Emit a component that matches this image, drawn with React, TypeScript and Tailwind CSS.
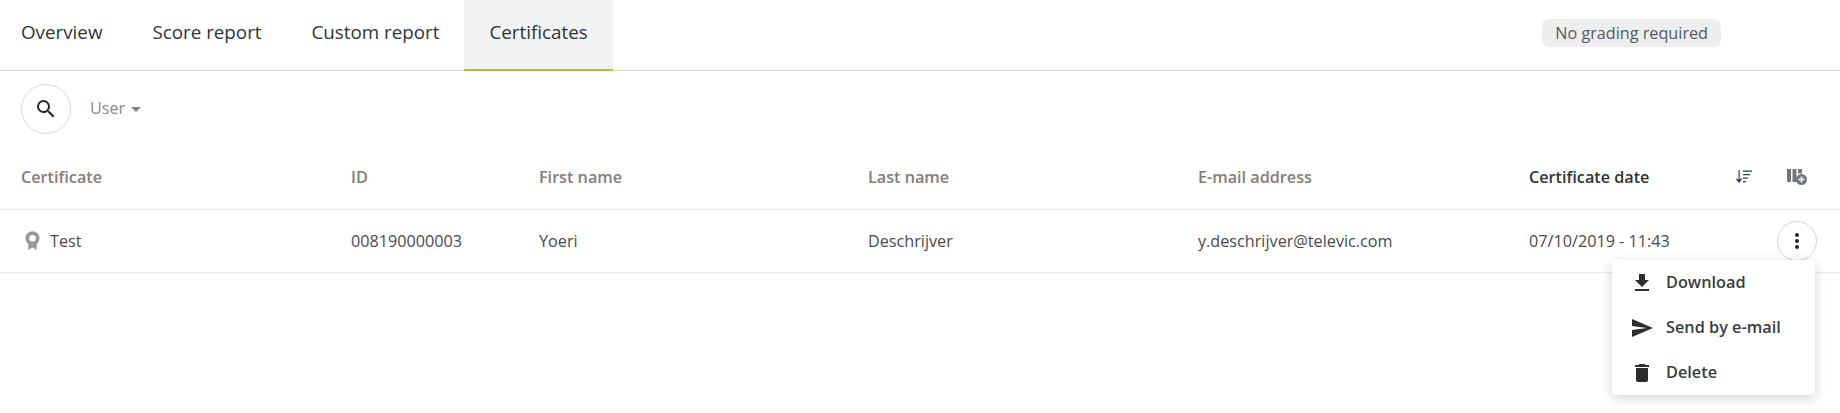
import { ReactNode } from 'react';

function Icon({ d, className }: { d: string; className: string }) {
  return (
    <svg viewBox="0 0 24 24" className={className} fill="currentColor">
      <path d={d} />
    </svg>
  );
}

const columns = ['Certificate', 'ID', 'First name', 'Last name', 'E-mail address'];
const gridCols = 'grid grid-cols-[330px_188px_329px_330px_331px_1fr]';

function MenuItem({ icon, label }: { icon: ReactNode; label: string }) {
  return (
    <div className="flex h-[45px] items-center">
      <div className="flex w-[54px] justify-center pl-[6px]">{icon}</div>
      <span className="text-[16.3px] font-semibold text-[#3a3d40]">{label}</span>
    </div>
  );
}

export default function App() {
  return (
    <div className="h-[413px] w-[1840px] overflow-hidden bg-white font-['Open_Sans',sans-serif]">
      {/* Tabs */}
      <div className="flex h-[71px] items-stretch border-b border-[#d4d4d4] text-[18.8px] text-[#2f3438]">
        <div className="flex items-center pr-[25px] pb-[6px] pl-[21px]">Overview</div>
        <div className="flex items-center px-[25px] pb-[6px]">Score report</div>
        <div className="flex items-center px-[25px] pb-[6px]">Custom report</div>
        <div className="-mb-px flex items-center border-b-2 border-[#a6c737] bg-[#f1f3f3] px-[25px] pb-[5px]">Certificates</div>
        <div className="mr-[119px] ml-auto flex items-center pb-[4px]">
          <span className="rounded-[7px] bg-[#eeeeee] px-[13px] py-[3px] text-[16.2px] leading-[22px] text-[#555a63]">No grading required</span>
        </div>
      </div>

      {/* Filter */}
      <div className="flex items-center pt-[13px] pl-[21px]">
        <button className="flex h-[50px] w-[50px] items-center justify-center rounded-full border border-[#d9d9d9]">
          <Icon className="h-6 w-6 text-[#23272a]" d="M15.5 14h-.79l-.28-.27A6.471 6.471 0 0 0 16 9.5 6.5 6.5 0 1 0 9.5 16c1.61 0 3.09-.59 4.23-1.57l.27.28v.79l5 4.99L20.49 19l-4.99-5zm-6 0C7.01 14 5 11.99 5 9.5S7.01 5 9.500 5 14 7.010 14 9.500 11.990 14 9.500 14z" />
        </button>
        <span className="mb-[2px] ml-[19px] text-[16.2px] text-[#8a8a8a]">User</span>
        <span className="ml-[6px] h-0 w-0 border-x-[5px] border-t-[5px] border-x-transparent border-t-[#808080]" />
      </div>

      {/* Table header */}
      <div className={`${gridCols} mt-[13px] h-[63px] items-center border-b border-[#eaeaea] pb-[2px] pl-[21px] text-[16.2px] font-semibold text-[#857d78]`}>
        {columns.map((c) => (
          <div key={c}>{c}</div>
        ))}
        <div className="flex items-center pr-[33px]">
          <span className="whitespace-nowrap text-[#2f3438]">Certificate date</span>
          <svg viewBox="0 0 16 13" className="ml-auto h-[13px] w-4 text-[#2a3f55]" fill="currentColor">
            <path d="M2.500 0h1.200v9.800L5.300 8.200l.8.8L3.100 13 0 9l.8-.8 1.700 1.600z" />
            <path d="M7 0.500h9v1.300H7zM7 4h7v1.300H7zM7 7.500h5v1.300H7zM7 11h3v1.300H7z" />
          </svg>
          <svg viewBox="0 0 20 16" className="ml-[35px] h-4 w-5 text-[#73777a]" fill="currentColor">
            <path d="M0 0h4v13H0zM5.500 0h4v13h-4zM11 0h4v4.500h-4z" />
            <circle cx="14.500" cy="10.500" r="5.500" />
            <path fill="#fff" d="M13.700 7.500h1.600v2.200h2.200v1.600h-2.200v2.200h-1.600v-2.200h-2.200V9.700h2.200z" />
          </svg>
        </div>
      </div>

      {/* Row */}
      <div className={`${gridCols} relative h-[63px] items-center border-b border-[#eaeaea] pl-[21px] text-[16.2px] text-[#4a4a4a]`}>
        <div className="flex items-center">
          <svg viewBox="0 0 16 20" className="ml-[4px] h-[19px] w-[15px] text-[#999999]" fill="currentColor">
            <path d="M3.500 12v8L8 17.500l4.500 2.500v-8z" />
            <path fillRule="evenodd" d="M8 0a7.500 7.500 0 1 1 0 15A7.500 7.500 0 0 1 8 0zM8 4a3.500 3.500 0 1 0 0 7 3.500 3.500 0 0 0 0-7z" />
          </svg>
          <span className="ml-[10px]">Test</span>
        </div>
        <div>008190000003</div>
        <div>Yoeri</div>
        <div>Deschrijver</div>
        <div>y.deschrijver@televic.com</div>
        <div>07/10/2019 - 11:43</div>
        <button className="absolute top-[11px] right-[23px] flex h-10 w-10 items-center justify-center rounded-full border border-[#d4d4d4] bg-white">
          <Icon className="h-6 w-6 text-[#23272a]" d="M12 8c1.100 0 2-.9 2-2s-.9-2-2-2-2 .9-2 2 .9 2 2 2zm0 2c-1.100 0-2 .9-2 2s.9 2 2 2 2-.9 2-2-.9-2-2-2zm0 6c-1.100 0-2 .9-2 2s.9 2 2 2 2-.9 2-2-.9-2-2-2z" />
        </button>
        {/* Dropdown menu */}
        <div className="absolute top-[50px] right-[25px] w-[203px] rounded-[4px] bg-white shadow-[0_3px_12px_rgba(0,0,0,0.18)]">
          <MenuItem label="Download" icon={<Icon className="h-6 w-6 text-[#2b2e31]" d="M19 9h-4V3H9v6H5l7 7 7-7zM5 18v2h14v-2H5z" />} />
          <MenuItem label="Send by e-mail" icon={<Icon className="h-6 w-6 text-[#2b2e31]" d="M2.010 21L23 12 2.010 3 2 10l15 2-15 2z" />} />
          <MenuItem label="Delete" icon={<Icon className="h-6 w-6 text-[#2b2e31]" d="M6 19c0 1.100.9 2 2 2h8c1.100 0 2-.9 2-2V7H6v12zM19 4h-3.500l-1-1h-5l-1 1H5v2h14V4z" />} />
        </div>
      </div>
    </div>
  );
}
